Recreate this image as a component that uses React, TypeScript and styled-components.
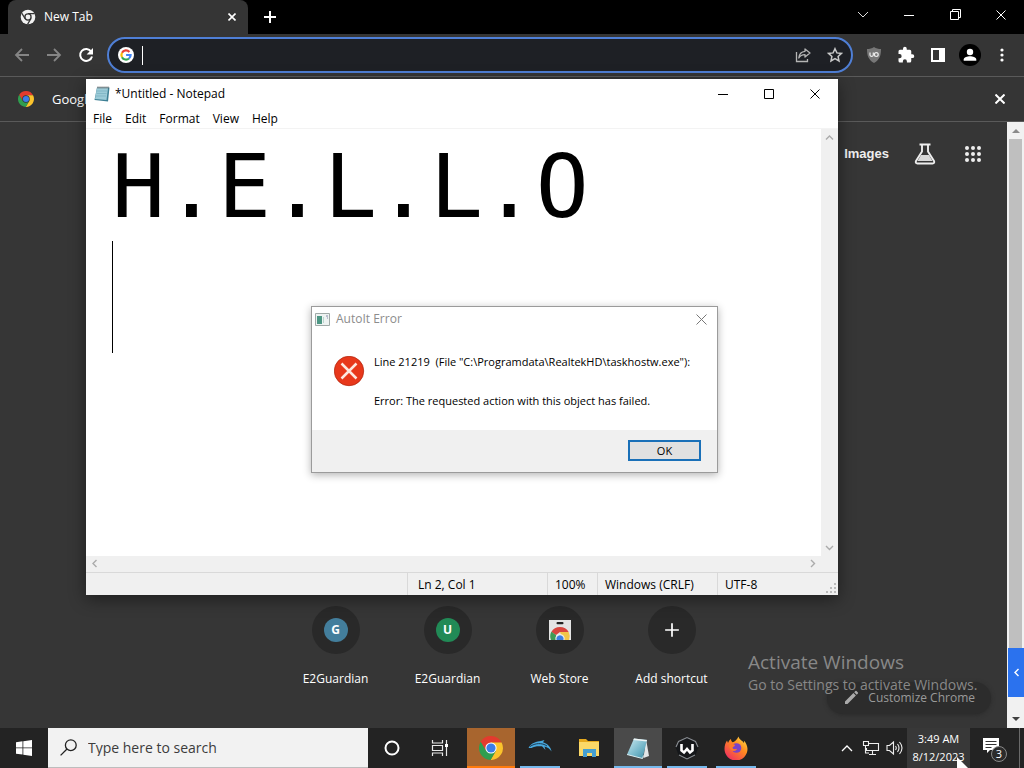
import React from "react";
import styled, { createGlobalStyle } from "styled-components";

const GlobalStyle = createGlobalStyle`
  *, *::before, *::after { box-sizing: border-box; }
  body { margin: 0; background: #363636; }
  button, input, textarea { font: inherit; color: inherit; margin: 0; padding: 0; border: 0; background: none; border-radius: 0; }
  svg { display: block; flex: none; }
`;

const Desktop = styled.div`
  position: relative;
  display: flex;
  flex-direction: column;
  min-height: 100vh;
  overflow: hidden;
  background: #363636;
  color: #fff;
  font-family: "Open Sans", "Noto Sans", sans-serif;
  font-size: 12px;
  line-height: 16px;
`;

/* ---------- Browser ---------- */

const Browser = styled.main`
  flex: 1;
  display: flex;
  flex-direction: column;
`;

const TabStrip = styled.header`
  display: flex;
  height: 34px;
  padding-left: 8px;
  background: #000;
`;

const Tab = styled.div`
  display: flex;
  align-items: center;
  gap: 8px;
  width: 240px;
  padding: 0 8px 0 12px;
  border-radius: 8px 8px 0 0;
  background: #353535;
`;

const TabTitle = styled.span`
  flex: 1;
`;

const IconButton = styled.button<{ $width?: number }>`
  display: flex;
  align-items: center;
  justify-content: center;
  width: ${(p) => p.$width ?? 32}px;
  height: 100%;
`;

const WindowButtons = styled.div<{ $height: number }>`
  display: flex;
  height: ${(p) => p.$height}px;
  margin-left: auto;
`;

const Toolbar = styled.div`
  display: flex;
  align-items: center;
  height: 43px;
  padding: 0 6px;
  background: #353535;
  border-bottom: 1px solid #5a5a5a;
`;

const Omnibox = styled.div`
  display: flex;
  flex: 1;
  align-items: center;
  height: 36px;
  margin: 0 5px;
  padding-left: 9px;
  border: 2px solid #4f7fd6;
  border-radius: 18px;
  background: #1e2025;
`;

const OmniboxCaret = styled.span`
  width: 1px;
  height: 19px;
  margin-left: 8px;
  background: #fff;
`;

const OmniboxInput = styled.input`
  flex: 1;
  min-width: 0;
  outline: none;
`;

const InfoBar = styled.div`
  display: flex;
  align-items: center;
  gap: 18px;
  height: 45px;
  padding: 0 8px 0 18px;
  background: #353535;
  border-bottom: 1px solid #5a5a5a;
  font-size: 13px;
`;

const InfoText = styled.span`
  flex: 1;
`;

const Viewport = styled.section`
  flex: 1;
  display: flex;
`;

const NewTabPage = styled.div`
  flex: 1;
  display: flex;
  flex-direction: column;
  justify-content: space-between;
`;

const PageLinks = styled.nav`
  display: flex;
  align-items: center;
  justify-content: flex-end;
  gap: 25px;
  height: 64px;
  padding-right: 22px;
`;

const PageLink = styled.a`
  color: #eee;
  font: bold 13px/16px "Liberation Sans", sans-serif;
  text-decoration: none;
`;

const PageBottom = styled.div`
  display: flex;
  flex-direction: column;
`;

const Shortcuts = styled.ul`
  display: flex;
  justify-content: center;
  margin: 0;
  padding: 0;
  list-style: none;
`;

const Shortcut = styled.a`
  display: flex;
  flex-direction: column;
  align-items: center;
  gap: 17px;
  width: 112px;
  color: #fff;
  text-decoration: none;
`;

const ShortcutDisc = styled.span`
  display: flex;
  align-items: center;
  justify-content: center;
  width: 48px;
  height: 48px;
  border-radius: 50%;
  background: #292929;
`;

const Monogram = styled.span<{ $color: string }>`
  display: flex;
  align-items: center;
  justify-content: center;
  width: 24px;
  height: 24px;
  border-radius: 50%;
  background: ${(p) => p.$color};
  font-weight: 700;
`;

const CustomizeButton = styled.button`
  display: flex;
  align-items: center;
  align-self: flex-end;
  gap: 9px;
  height: 32px;
  margin: -5px 16px 14px 0;
  padding: 0 16px;
  border-radius: 16px;
  background: #2c2c2c;
  color: #9a9a9a;
  box-shadow: 0 1px 4px #2a2a2a;
`;

const PageScrollbar = styled.div`
  display: flex;
  flex-direction: column;
  align-items: center;
  width: 17px;
  background: #f1f1f1;
`;

const ScrollEnd = styled.span`
  display: flex;
  align-items: center;
  justify-content: center;
  width: 17px;
  height: 17px;
`;

const ScrollThumb = styled.span`
  flex: 1;
  width: 13px;
  background: #bfbfbf;
`;

const SidePanelTab = styled.button`
  display: flex;
  align-items: center;
  justify-content: center;
  width: 16px;
  height: 49px;
  margin-left: 1px;
  background: #2b72ee;
`;

const ScrollTrack = styled.span`
  height: 14px;
`;

const Watermark = styled.div`
  position: absolute;
  right: 40px;
  bottom: 73px;
  min-width: 236px;
  color: #888;
  font-size: 14px;
  line-height: 20px;
`;

const WatermarkTitle = styled.div`
  font-size: 19px;
  line-height: 26px;
`;

/* ---------- Notepad ---------- */

const NotepadWindow = styled.section`
  position: absolute;
  left: 86px;
  top: 79px;
  display: flex;
  flex-direction: column;
  width: 752px;
  height: 516px;
  background: #fff;
  color: #000;
  box-shadow: 0 4px 16px rgba(0, 0, 0, 0.45);
`;

const NotepadTitle = styled.header`
  display: flex;
  align-items: center;
  gap: 5px;
  height: 29px;
  padding-left: 8px;
`;

const MenuBar = styled.nav`
  display: flex;
  align-items: flex-end;
  gap: 13px;
  height: 21px;
  padding: 0 0 1px 7px;
  border-bottom: 1px solid #f3f3f3;
`;

const EditorRow = styled.div`
  position: relative;
  flex: 1;
  display: flex;
`;

const Editor = styled.textarea`
  flex: 1;
  padding: 2px 0 0 26px;
  overflow: hidden;
  resize: none;
  outline: none;
  font: 88px/112px "DejaVu Sans Mono", monospace;
`;

const EditorCaret = styled.span`
  position: absolute;
  left: 26px;
  top: 112px;
  width: 1px;
  height: 112px;
  background: #000;
`;

const VerticalScroll = styled.div`
  display: flex;
  flex-direction: column;
  justify-content: space-between;
  background: #f0f0f0;
`;

const HorizontalScroll = styled.div`
  display: flex;
  align-items: flex-end;
  justify-content: space-between;
  height: 16px;
  padding-right: 17px;
  background: #f0f0f0;
`;

const StatusBar = styled.footer`
  display: flex;
  height: 23px;
  background: #f0f0f0;
  border-top: 1px solid #d9d9d9;
`;

const StatusCell = styled.span<{ $width?: number; $pad?: number }>`
  flex: ${(p) => (p.$width ? "none" : "1")};
  width: ${(p) => (p.$width ? `${p.$width}px` : "auto")};
  padding: 4px 0 0 ${(p) => p.$pad ?? 7}px;
  border-right: 1px solid #d9d9d9;
  white-space: nowrap;
  &:last-of-type { border-right: 0; }
`;

const Grip = styled.div`
  display: flex;
  align-items: flex-end;
  padding: 1px;
`;

/* ---------- Error dialog ---------- */

const Dialog = styled.section`
  position: absolute;
  left: 311px;
  top: 306px;
  display: flex;
  flex-direction: column;
  width: 407px;
  background: #fff;
  border: 1px solid #9b9b9b;
  color: #000;
  box-shadow: 0 2px 8px rgba(0, 0, 0, 0.3);
`;

const DialogTitle = styled.header`
  display: flex;
  align-items: center;
  gap: 6px;
  height: 24px;
  padding-left: 3px;
  color: #8c8c8c;
`;

const DialogBody = styled.div`
  display: flex;
  gap: 9px;
  height: 99px;
  padding: 23px 0 0 22px;
`;

const Message = styled.div`
  display: flex;
  flex-direction: column;
  gap: 23px;
  font-size: 11px;
  white-space: pre;
`;

const MessageIcon = styled.div`
  padding-top: 2px;
`;

const DialogFooter = styled.footer`
  display: flex;
  justify-content: flex-end;
  padding: 10px 16px 11px;
  background: #f0f0f0;
`;

const OkButton = styled.button`
  width: 73px;
  height: 21px;
  border: 2px solid #1a70b8;
  background: #e1e1e1;
  font-size: 11px;
`;

/* ---------- Taskbar ---------- */

const Taskbar = styled.footer`
  position: relative;
  display: flex;
  height: 40px;
  background: #232323;
`;

const SearchBox = styled.label`
  display: flex;
  align-items: center;
  gap: 11px;
  width: 320px;
  padding-left: 12px;
  background: #f2f2f2;
  border-bottom: 1px solid #bdbdbd;
  color: #333;
`;

const SearchInput = styled.input`
  flex: 1;
  min-width: 0;
  outline: none;
  font-size: 14px;
  &::placeholder { color: #3c3c3c; opacity: 1; }
`;

const Apps = styled.div`
  display: flex;
  gap: 1px;
  margin-left: 3px;
`;

const AppButton = styled.button<{ $fill?: string; $bar?: string; $wide?: boolean }>`
  display: flex;
  flex-direction: column;
  align-items: center;
  justify-content: space-between;
  width: 48px;
  height: 40px;
  padding-top: 8px;
  background: ${(p) => p.$fill ?? "transparent"};
  &::after {
    content: "";
    width: ${(p) => (p.$wide ? 48 : 40)}px;
    height: 2px;
    background: ${(p) => p.$bar ?? "transparent"};
  }
`;

const Tray = styled.div`
  display: flex;
  margin-left: auto;
`;

const Clock = styled.button`
  width: 63px;
  background: #383838;
  font-size: 11px;
  line-height: 18px;
  white-space: nowrap;
`;

const ShowDesktop = styled.button`
  width: 5px;
  border-left: 1px solid #6a6a6a;
`;

const Pointer = styled.svg`
  position: absolute;
  right: 55px;
  top: 29px;
`;

/* ---------- Drawings ---------- */

const ChromeLogo = ({ size, center = "#fff" }: { size: number; center?: string }) => (
  <svg width={size} height={size} viewBox="0 0 24 24">
    <path d="M12 6.4h10.6A12 12 0 0 0 1.6 6l5.3 9.1z" fill="#e33b2e" />
    <path d="M16.9 14.8 11.6 24A12 12 0 0 0 22.6 6.4H12z" fill="#fbc32c" />
    <path d="M7.1 14.8 1.7 5.8A12 12 0 0 0 11.6 24l5.2-9.1z" fill="#2f9e4f" />
    <circle cx="12" cy="12" r="5.6" fill={center} />
    <circle cx="12" cy="12" r="4.6" fill="#3b7de9" />
  </svg>
);

const MonoChrome = () => (
  <svg width="16" height="16" viewBox="0 0 24 24">
    <circle cx="12" cy="12" r="11" fill="#f2f2f2" />
    <path d="M12 7h10M7.7 14.5 2.6 6.2M16.3 14.5 11.3 23" stroke="#353535" strokeWidth="1.8" />
    <circle cx="12" cy="12" r="5.6" fill="#353535" />
    <circle cx="12" cy="12" r="3.6" fill="#f2f2f2" />
  </svg>
);

const CrossIcon = ({ size, color = "#fff", width = 1 }: { size: number; color?: string; width?: number }) => (
  <svg width={size} height={size} viewBox={`0 0 ${size} ${size}`}>
    <path d={`M.5.5 ${size - 0.5} ${size - 0.5}M${size - 0.5}.5.5 ${size - 0.5}`} stroke={color} strokeWidth={width} />
  </svg>
);

const PlusIcon = ({ size, width = 2 }: { size: number; width?: number }) => (
  <svg width={size} height={size} viewBox="0 0 14 14">
    <path d="M7 1v12M1 7h12" stroke="#fff" strokeWidth={width} />
  </svg>
);

const MinimizeIcon = ({ color }: { color: string }) => (
  <svg width="10" height="10"><path d="M0 5.5h10" stroke={color} /></svg>
);

const ArrowIcon = ({ flip }: { flip?: boolean }) => (
  <svg width="16" height="16" viewBox="0 0 16 16">
    <path d={flip ? "M1 8h13M8 2l6 6-6 6" : "M15 8H2M8 2 2 8l6 6"} fill="none" stroke="#858585" strokeWidth="1.8" />
  </svg>
);

const ReloadIcon = () => (
  <svg width="16" height="16" viewBox="0 0 16 16">
    <path d="M13.2 4.6A6 6 0 1 0 14 9.4" fill="none" stroke="#fff" strokeWidth="2" />
    <path d="M15 1v6.4H8.6z" fill="#fff" />
  </svg>
);

const GoogleIcon = () => (
  <svg width="16" height="16" viewBox="0 0 16 16">
    <circle cx="8" cy="8" r="8" fill="#fff" />
    <g fill="none" strokeWidth="2.2">
      <path d="M11.4 4.9A4.6 4.6 0 0 0 4 5.8" stroke="#ea4335" />
      <path d="M4 5.8a4.6 4.6 0 0 0 0 4.5" stroke="#fbbc05" />
      <path d="M4 10.2a4.6 4.6 0 0 0 7 1.3" stroke="#34a853" />
      <path d="M11 11.5A4.6 4.6 0 0 0 12.6 8H8.1" stroke="#4285f4" />
    </g>
  </svg>
);

const ShareIcon = () => (
  <svg width="16" height="16" viewBox="0 0 16 16" fill="none" stroke="#b5b5b5" strokeWidth="1.3">
    <path d="M1.5 5v9.5h11V12" />
    <path d="M10 2l5 4-5 4V7.700C7 7.700 5 8.800 3.800 11 4.200 7 6.500 4.600 10 4.300z" strokeLinejoin="round" />
  </svg>
);

const StarIcon = () => (
  <svg width="16" height="16" viewBox="0 0 16 16">
    <path d="M8 1.700l1.900 4.200 4.600.5-3.400 3.100.9 4.500-4-2.300L4 14l.9-4.500L1.500 6.400l4.600-.5z" fill="none" stroke="#c8c8c8" strokeWidth="1.500" />
  </svg>
);

const ShieldIcon = () => (
  <svg width="16" height="16" viewBox="0 0 16 16">
    <path d="M8 0c2 1.500 4.500 2 7 2 0 6-1 10.500-7 14C2 12.500 1 8 1 2c2.500 0 5-.5 7-2z" fill="#777" />
    <path d="M4 5.500v2.600a1.700 1.700 0 0 0 3.300 0V5.500" fill="none" stroke="#eee" strokeWidth="1.200" />
    <circle cx="10.300" cy="7.600" r="1.900" fill="none" stroke="#eee" strokeWidth="1.200" />
  </svg>
);

const PuzzleIcon = () => (
  <svg width="18" height="18" viewBox="0 0 24 24" fill="#fff">
    <path d="M20.500 11H19V7a2 2 0 0 0-2-2h-4V3.500a2.500 2.500 0 0 0-5 0V5H4a2 2 0 0 0-2 2v3.800h1.500a2.700 2.700 0 0 1 0 5.400H2V20a2 2 0 0 0 2 2h3.800v-1.500a2.700 2.700 0 0 1 5.400 0V22H17a2 2 0 0 0 2-2v-4h1.500a2.500 2.500 0 0 0 0-5z" />
  </svg>
);

const PanelIcon = () => (
  <svg width="14" height="14" viewBox="0 0 14 14">
    <path fillRule="evenodd" d="M0 0h14v14H0zM2 2v10h6V2z" fill="#fff" />
  </svg>
);

const AvatarIcon = () => (
  <svg width="22" height="22" viewBox="0 0 22 22">
    <circle cx="11" cy="11" r="11" fill="#000" />
    <circle cx="11" cy="8" r="3.200" fill="#fff" />
    <path d="M4.700 16.800v-1.300c0-2.300 3.800-3.300 6.300-3.300s6.300 1 6.300 3.300v1.300z" fill="#fff" />
  </svg>
);

const FlaskIcon = () => (
  <svg width="22" height="22" viewBox="0 0 22 22">
    <path d="M5.500 1.500h11M8 2v6.500L2 18c-.7 1.500 0 2.500 1.400 2.500h15.200c1.400 0 2.100-1 1.400-2.500L14 8.500V2" fill="none" stroke="#eee" strokeWidth="1.900" />
    <path d="M7 12h8l3.500 6h-15z" fill="#d8d8d8" />
  </svg>
);

const AppsGridIcon = () => (
  <svg width="24" height="24" viewBox="0 0 24 24" fill="#eee">
    {[6, 12, 18].map((y) => [6, 12, 18].map((x) => (
      <circle key={`${x}-${y}`} cx={x} cy={y} r="2" />
    )))}
  </svg>
);

const WebStoreIcon = () => (
  <svg width="24" height="24" viewBox="0 0 24 24">
    <path d="M1 2h22v20H1z" fill="#e4e4e4" />
    <rect x="8.500" y="4" width="7" height="2.200" rx="1" fill="#222" />
    <path d="M3.300 14A10 10 0 0 1 20.700 14H12l-4 3z" fill="#d8453e" />
    <path d="M3.300 13.700A10 10 0 0 0 3 22h5.500L8 17z" fill="#3f9a55" />
    <path d="M12 14h8.700A10 10 0 0 1 21 22h-6z" fill="#f1c548" />
    <path d="M7.500 22a4.700 4.700 0 1 1 9 0z" fill="#ececec" />
    <path d="M8.600 22a3.600 3.600 0 1 1 6.800 0z" fill="#3d7fe0" />
  </svg>
);

const PencilIcon = () => (
  <svg width="16" height="16" viewBox="0 0 16 16" fill="#aaa">
    <path d="M2 11.500 10.400 3.100 12.900 5.600 4.500 14H2zM11.200 2.300l1.200-1.200a.8.800 0 0 1 1.100 0l1.400 1.400a.8.800 0 0 1 0 1.100l-1.200 1.200z" />
  </svg>
);

const NotepadIcon = () => (
  <svg width="16" height="16" viewBox="0 0 16 16">
    <path d="M3 1.500h12.500l-1.500 14L.5 14z" fill="#3d7f94" />
    <path d="M3 2h11l-1.500 12L1 13z" fill="#9ccbd8" />
    <path d="M3 5h10M2.500 7.500h10M2 10h10" stroke="#78b0c0" strokeWidth=".7" />
    <path d="M4 .5v2M6 .5v2M8 .5v2M10 .5v2M12 .5v2M14 .5v2" stroke="#555" strokeWidth=".9" />
  </svg>
);

const NotepadAppIcon = () => (
  <svg width="24" height="24" viewBox="0 0 24 24">
    <defs>
      <linearGradient id="page" x1="0" y1="0" x2="1" y2="1">
        <stop offset="0" stopColor="#cdeaf0" /><stop offset=".6" stopColor="#72b5c8" /><stop offset="1" stopColor="#3c8aa3" />
      </linearGradient>
    </defs>
    <path d="M20 3l3 17-5.500 2z" fill="#e3e6e7" />
    <path d="M8 2.500 21 4l-4.500 18.500L1 18.500z" fill="url(#page)" />
    <path d="M8 2.500 21 4l-.4 1.600L7.300 4.100z" fill="#eef4f5" />
    <path d="M1 18.500l15.500 4 1-3" fill="none" stroke="#d9eef2" />
  </svg>
);

const Chevron = ({ d, color = "#ababab" }: { d: string; color?: string }) => (
  <svg width="9" height="9" viewBox="0 0 9 9"><path d={d} fill="none" stroke={color} strokeWidth="1.400" /></svg>
);

const UP = "M1 6.500 4.500 3 8 6.500";
const DOWN = "M1 3 4.500 6.500 8 3";
const LEFT = "M6.500 1 3 4.500 6.500 8";
const RIGHT = "M3 1 6.500 4.500 3 8";

const GripIcon = () => (
  <svg width="11" height="11" fill="#bbb">
    <path d="M8 0h2v2H8zM8 4h2v2H8zM8 8h2v2H8zM4 4h2v2H4zM4 8h2v2H4zM0 8h2v2H0z" />
  </svg>
);

const AppWindowIcon = () => (
  <svg width="15" height="13" viewBox="0 0 15 13">
    <path d="M.5.5h14v12H.5z" fill="#eef3f2" stroke="#a0aaa8" />
    <path d="M2 3h5v8H2z" fill="#4d9784" />
    <path d="M8.500 4v6" stroke="#b9d6ce" />
    <path d="M11 3h2M12 5h1" stroke="#88a" />
  </svg>
);

const ErrorIcon = () => (
  <svg width="31" height="31" viewBox="0 0 31 31">
    <circle cx="15" cy="15" r="14.700" fill="#e8381b" stroke="#b52a12" strokeWidth=".8" />
    <path d="M7.500 7.500l15 15M22.500 7.500l-15 15" stroke="#fde8e0" strokeWidth="2.500" />
  </svg>
);

const WindowsLogo = () => (
  <svg width="16" height="16" viewBox="0 0 16 16" fill="#fff">
    <path d="M0 2.200 6.500 1.300v6.200H0zM7.300 1.200 16 0v7.500H7.300zM0 8.300h6.500v6.300L0 13.700zM7.300 8.300H16V16l-8.700-1.200z" />
  </svg>
);

const MagnifierIcon = () => (
  <svg width="17" height="17" viewBox="0 0 17 17" fill="none" stroke="#222" strokeWidth="1.300">
    <circle cx="10.800" cy="6.200" r="5.400" /><path d="M7 10 .6 16.400" />
  </svg>
);

const CortanaIcon = () => (
  <svg width="24" height="24"><circle cx="12" cy="12" r="6.500" fill="none" stroke="#fff" strokeWidth="2" /></svg>
);

const TaskViewIcon = () => (
  <svg width="24" height="24" fill="none" stroke="#e8e8e8">
    <path d="M4.500 4v3h10V4M4.500 20v-3h10v3M4.500 9.500h10v5h-10zM18.500 4v16" strokeWidth="1.200" />
    <path d="M17 8h3v3h-3z" fill="#fff" stroke="none" />
  </svg>
);

const DolphinIcon = () => (
  <svg width="24" height="24" viewBox="0 0 24 24">
    <path d="M.5 12C3 6.500 9 5.500 13 5l3.500-1-1.500 2.200c5 1.500 8 5.300 8.500 9.300-1.500-2.500-4-4.500-7-5l1 3.500-3.500-3.700C9 10 6 10.500 3.500 12z" fill="#48a9de" />
    <path d="M2 10.500c5-3.500 12-4 17-.5" stroke="#1c3d55" fill="none" />
  </svg>
);

const FolderIcon = () => (
  <svg width="24" height="24" viewBox="0 0 24 24">
    <path d="M2 3h7l2 2h11v15H2z" fill="#e6a91d" /><path d="M2 6h20v14H2z" fill="#fbd867" />
    <path d="M6 21v-8h13v8h-4v-4h-5v4z" fill="#459fd0" />
  </svg>
);

const WSignIcon = () => (
  <svg width="24" height="24" viewBox="0 0 24 24">
    <path d="M12 1 21 5.500 23.500 11 20 20l-8 3.500L4 20 .5 11 3 5.500z" fill="#15171a" />
    <path d="M1 11 3.500 5.500 12 1.500l8.500 4L23 11M4 19l8 4 8-4" fill="none" stroke="#8b8f94" strokeWidth="1.100" />
    <path d="M6.500 8v6.500l2.500 2 3-3.500 3 3.500 2.500-2V8" fill="none" stroke="#fff" strokeWidth="2.600" />
  </svg>
);

const FirefoxIcon = () => (
  <svg width="24" height="24" viewBox="0 0 24 24">
    <defs>
      <linearGradient id="fox" x1="1" y1="0" x2="0.200" y2="1">
        <stop offset="0" stopColor="#ffe94a" /><stop offset=".45" stopColor="#ff8a1f" /><stop offset="1" stopColor="#f02c62" />
      </linearGradient>
    </defs>
    <path d="M14.500.5c.5 3 4 4 5.500 6.500.2-1 0-1.500-.2-2.500 2.200 2 3.700 5.500 3.700 8.500a11.500 11.500 0 0 1-23 0c0-3.500 1-6.500 2.500-8.500L4 7c.5-1.500 1.500-3 3-4 0 1.500.5 2.500 1.500 3.200C10.500 6 13 4 14.500.5z" fill="url(#fox)" />
    <circle cx="12.500" cy="12" r="4.800" fill="#7a42c8" />
    <path d="M5.500 9c2-1.500 4-.8 5.500 0 0 1.500-2 1.500-2.500 2.700 1 2 3 1.500 4.500 1-.8 2.500-4 3-6 1C5.500 12.500 5 11 5.500 9z" fill="#ff7a2a" />
  </svg>
);

const NetworkIcon = () => (
  <svg width="18" height="16" viewBox="0 0 18 16" fill="none" stroke="#eee" strokeWidth="1.100">
    <path d="M6 3.500h10.500v7H4.500V8M10.500 10.500V14M7 14.500h7" /><path d="M1.500 1.500h5v4h-5zM3.500 5.500V13H7" />
  </svg>
);

const SpeakerIcon = () => (
  <svg width="18" height="16" viewBox="0 0 18 16" fill="none" stroke="#eee" strokeWidth="1.100">
    <path d="M1 5.500h2.500L7.500 2v12l-4-3.500H1zM9.500 6q1.500 2 0 4M11.500 4q3 4 0 8M13.500 2q5 6 0 12" />
  </svg>
);

const NotificationsIcon = () => (
  <svg width="26" height="28" viewBox="0 0 26 28">
    <path d="M1 4h16v12H8l-3 3v-3H1z" fill="#fff" />
    <path d="M3.500 7.500h11M3.500 10.500h11M3.500 13.500h6" stroke="#333" />
    <circle cx="17" cy="20" r="7.500" fill="#2b2b2b" stroke="#8a8a8a" />
    <text x="17" y="24" textAnchor="middle" fill="#fff" fontSize="11">3</text>
  </svg>
);

/* ---------- Screen ---------- */

const menus = ["File", "Edit", "Format", "View", "Help"];

const shortcuts = [
  { key: "g", label: "E2Guardian", icon: <Monogram $color="#437e9c">G</Monogram> },
  { key: "u", label: "E2Guardian", icon: <Monogram $color="#218a56">U</Monogram> },
  { key: "store", label: "Web Store", icon: <WebStoreIcon /> },
  { key: "add", label: "Add shortcut", icon: <PlusIcon size={16} width={1.5} /> },
];

const BLUE = "#76b9ed";

export default function App() {
  return (
    <Desktop>
      <GlobalStyle />
      <Browser>
        <TabStrip>
          <Tab>
            <MonoChrome />
            <TabTitle>New Tab</TabTitle>
            <IconButton $width={16} aria-label="Close tab"><CrossIcon size={8} width={1.6} /></IconButton>
          </Tab>
          <IconButton $width={44} aria-label="New tab"><PlusIcon size={14} /></IconButton>
          <WindowButtons $height={29}>
            <IconButton $width={46} aria-label="Search tabs">
              <svg width="12" height="8"><path d="M1 1l5 5 5-5" fill="none" stroke="#ddd" /></svg>
            </IconButton>
            <IconButton $width={46} aria-label="Minimize"><MinimizeIcon color="#fff" /></IconButton>
            <IconButton $width={46} aria-label="Restore">
              <svg width="11" height="11" fill="none" stroke="#fff"><path d="M.5 2.500h8v8h-8zM2.500 2V.5h8v8H9" /></svg>
            </IconButton>
            <IconButton $width={46} aria-label="Close"><CrossIcon size={10} /></IconButton>
          </WindowButtons>
        </TabStrip>
        <Toolbar>
          <IconButton aria-label="Back"><ArrowIcon /></IconButton>
          <IconButton aria-label="Forward"><ArrowIcon flip /></IconButton>
          <IconButton aria-label="Reload"><ReloadIcon /></IconButton>
          <Omnibox>
            <GoogleIcon />
            <OmniboxCaret />
            <OmniboxInput aria-label="Address" />
            <IconButton aria-label="Share"><ShareIcon /></IconButton>
            <IconButton aria-label="Bookmark"><StarIcon /></IconButton>
          </Omnibox>
          <IconButton aria-label="Content blocker"><ShieldIcon /></IconButton>
          <IconButton aria-label="Extensions"><PuzzleIcon /></IconButton>
          <IconButton aria-label="Side panel"><PanelIcon /></IconButton>
          <IconButton aria-label="Profile"><AvatarIcon /></IconButton>
          <IconButton aria-label="Menu">
            <svg width="4" height="14" fill="#fff"><circle cx="2" cy="2" r="1.600" /><circle cx="2" cy="7" r="1.600" /><circle cx="2" cy="12" r="1.600" /></svg>
          </IconButton>
        </Toolbar>
        <InfoBar>
          <ChromeLogo size={16} center="#353535" />
          <InfoText>Google</InfoText>
          <IconButton aria-label="Dismiss"><CrossIcon size={10} width={2} /></IconButton>
        </InfoBar>
        <Viewport>
          <NewTabPage>
            <PageLinks>
              <PageLink href="#images">Images</PageLink>
              <FlaskIcon />
              <AppsGridIcon />
            </PageLinks>
            <PageBottom>
              <Shortcuts>
                {shortcuts.map((s) => (
                  <li key={s.key}>
                    <Shortcut href={`#${s.key}`}>
                      <ShortcutDisc>{s.icon}</ShortcutDisc>
                      {s.label}
                    </Shortcut>
                  </li>
                ))}
              </Shortcuts>
              <CustomizeButton><PencilIcon />Customize Chrome</CustomizeButton>
            </PageBottom>
          </NewTabPage>
          <PageScrollbar>
            <ScrollEnd><svg width="8" height="5"><path d="M0 5 4 1l4 4z" fill="#8a8a8a" /></svg></ScrollEnd>
            <ScrollThumb />
            <SidePanelTab aria-label="Open panel"><Chevron d={LEFT} color="#fff" /></SidePanelTab>
            <ScrollTrack />
            <ScrollEnd><svg width="8" height="5"><path d="M0 0l4 4 4-4z" fill="#404040" /></svg></ScrollEnd>
          </PageScrollbar>
        </Viewport>
      </Browser>

      <Watermark>
        <WatermarkTitle>Activate Windows</WatermarkTitle>
        Go to Settings to activate Windows.
      </Watermark>

      <NotepadWindow>
        <NotepadTitle>
          <NotepadIcon />
          <span>*Untitled - Notepad</span>
          <WindowButtons $height={29}>
            <IconButton $width={46} aria-label="Minimize"><MinimizeIcon color="#000" /></IconButton>
            <IconButton $width={46} aria-label="Maximize">
              <svg width="10" height="10"><path d="M.5.5h9v9h-9z" fill="none" stroke="#000" /></svg>
            </IconButton>
            <IconButton $width={46} aria-label="Close"><CrossIcon size={10} color="#000" /></IconButton>
          </WindowButtons>
        </NotepadTitle>
        <MenuBar>
          {menus.map((m) => <button key={m}>{m}</button>)}
        </MenuBar>
        <EditorRow>
          <Editor aria-label="Document" defaultValue={"H.E.L.L.O\n"} spellCheck={false} />
          <EditorCaret />
          <VerticalScroll>
            <ScrollEnd><Chevron d={UP} /></ScrollEnd>
            <ScrollEnd><Chevron d={DOWN} /></ScrollEnd>
          </VerticalScroll>
        </EditorRow>
        <HorizontalScroll>
          <ScrollEnd><Chevron d={LEFT} /></ScrollEnd>
          <ScrollEnd><Chevron d={RIGHT} /></ScrollEnd>
        </HorizontalScroll>
        <StatusBar>
          <StatusCell />
          <StatusCell $width={140} $pad={10}>Ln 2, Col 1</StatusCell>
          <StatusCell $width={50}>100%</StatusCell>
          <StatusCell $width={120}>Windows (CRLF)</StatusCell>
          <StatusCell $width={107}>UTF-8</StatusCell>
          <Grip><GripIcon /></Grip>
        </StatusBar>
      </NotepadWindow>

      <Dialog role="alertdialog" aria-label="AutoIt Error">
        <DialogTitle>
          <AppWindowIcon />
          <span>AutoIt Error</span>
          <WindowButtons $height={24}>
            <IconButton $width={31} aria-label="Close"><CrossIcon size={11} color="#777" /></IconButton>
          </WindowButtons>
        </DialogTitle>
        <DialogBody>
          <MessageIcon><ErrorIcon /></MessageIcon>
          <Message>
            <span>{'Line 21219  (File "C:\\Programdata\\RealtekHD\\taskhostw.exe"):'}</span>
            <span>Error: The requested action with this object has failed.</span>
          </Message>
        </DialogBody>
        <DialogFooter><OkButton>OK</OkButton></DialogFooter>
      </Dialog>

      <Taskbar>
        <IconButton $width={48} aria-label="Start"><WindowsLogo /></IconButton>
        <SearchBox>
          <MagnifierIcon />
          <SearchInput placeholder="Type here to search" aria-label="Type here to search" />
        </SearchBox>
        <IconButton $width={48} aria-label="Cortana"><CortanaIcon /></IconButton>
        <IconButton $width={48} aria-label="Task view"><TaskViewIcon /></IconButton>
        <Apps>
          <AppButton aria-label="Chrome" $fill="#a8652e" $bar="#ff7a0c" $wide><ChromeLogo size={24} /></AppButton>
          <AppButton aria-label="Dolphin" $bar={BLUE}><DolphinIcon /></AppButton>
          <AppButton aria-label="File Explorer"><FolderIcon /></AppButton>
          <AppButton aria-label="Notepad" $fill="#4a4a4a" $bar={BLUE} $wide><NotepadAppIcon /></AppButton>
          <AppButton aria-label="W app" $bar={BLUE}><WSignIcon /></AppButton>
          <AppButton aria-label="Firefox" $bar={BLUE}><FirefoxIcon /></AppButton>
        </Apps>
        <Tray>
          <IconButton $width={24} aria-label="Hidden icons">
            <svg width="12" height="8"><path d="M1 7l5-5 5 5" fill="none" stroke="#fff" strokeWidth="1.300" /></svg>
          </IconButton>
          <IconButton $width={24} aria-label="Network"><NetworkIcon /></IconButton>
          <IconButton $width={24} aria-label="Volume"><SpeakerIcon /></IconButton>
          <Clock>3:49 AM<br />8/12/2023</Clock>
          <IconButton $width={49} aria-label="Notifications"><NotificationsIcon /></IconButton>
          <ShowDesktop aria-label="Show desktop" />
        </Tray>
        <Pointer width="13" height="11" viewBox="0 0 13 11">
          <path d="M1 0v12h12z" fill="#fff" />
        </Pointer>
      </Taskbar>
    </Desktop>
  );
}
